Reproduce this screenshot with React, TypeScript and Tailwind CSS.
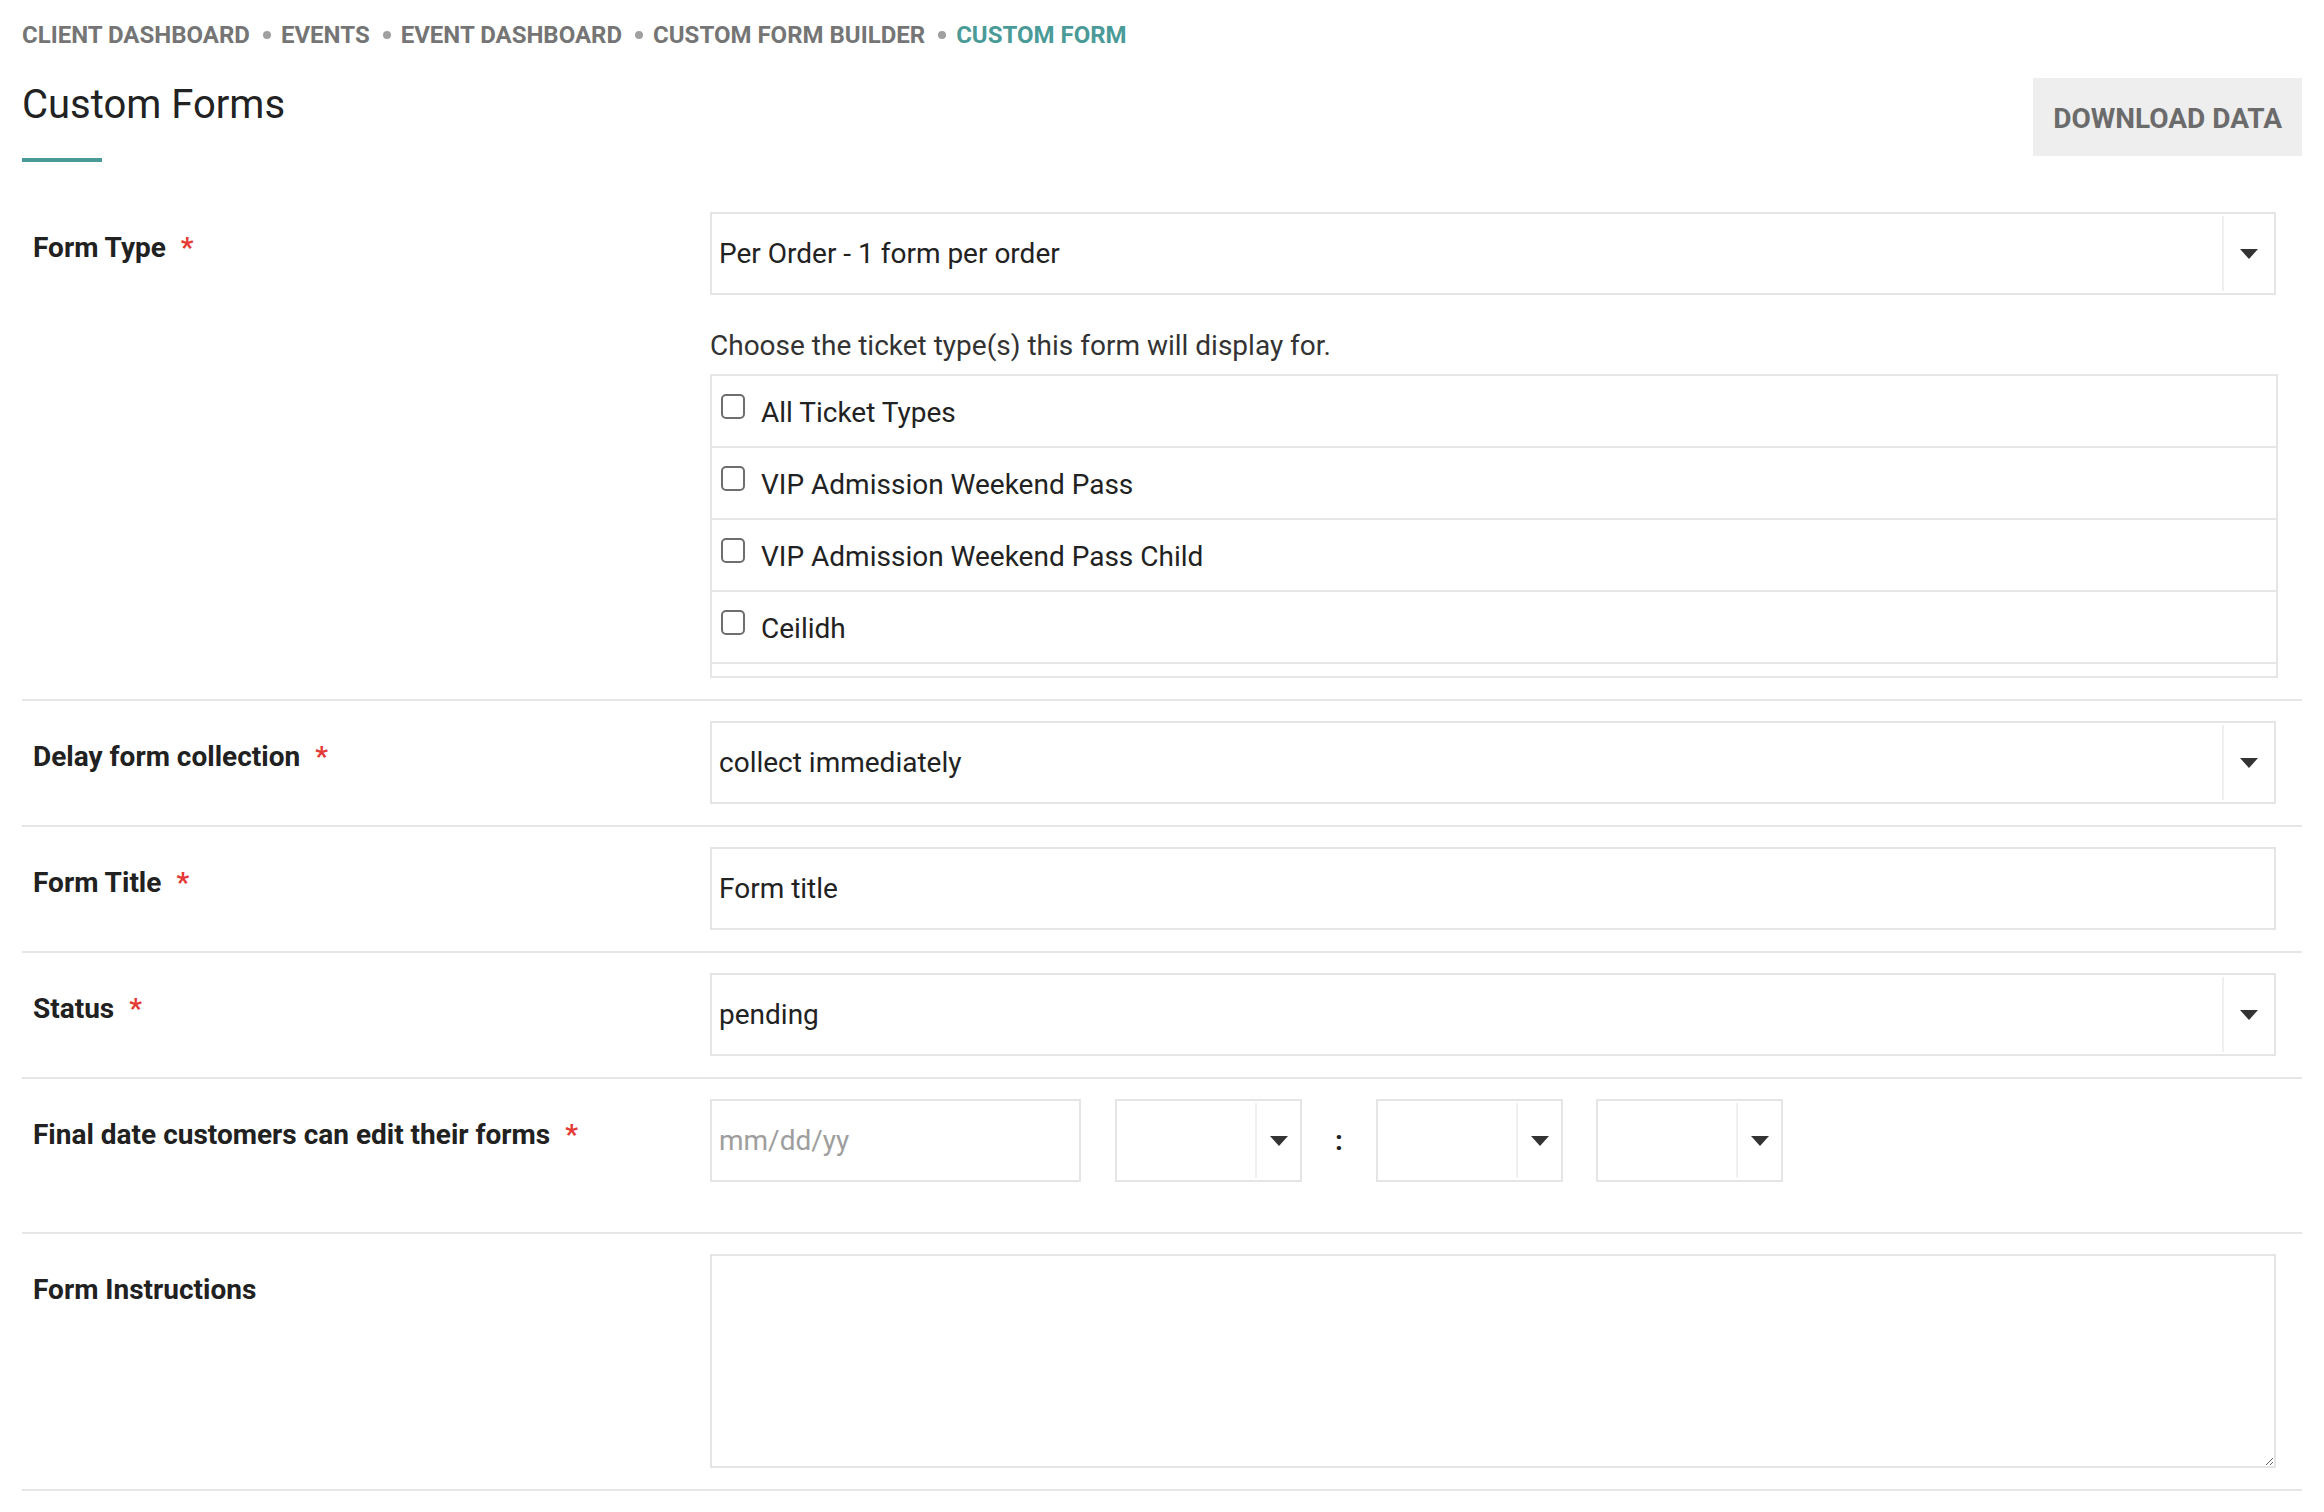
import React from 'react'

const crumbs = ['CLIENT DASHBOARD', 'EVENTS', 'EVENT DASHBOARD', 'CUSTOM FORM BUILDER']
const ticketTypes = ['All Ticket Types', 'VIP Admission Weekend Pass', 'VIP Admission Weekend Pass Child', 'Ceilidh']

function Caret() {
  return (
    <svg width="18" height="10" viewBox="0 0 18 10">
      <path d="M0 0h18L9 10z" fill="#333" />
    </svg>
  )
}

function SelectBox({ value, small }: { value?: string; small?: boolean }) {
  return (
    <div className={`h-[83px] border-2 border-[#e5e5e5] bg-white flex items-stretch ${small ? 'w-[187px]' : 'w-full'}`}>
      <div className="flex-1 flex items-center pl-[7px] text-[28px] text-[#222]">{value}</div>
      <div className="w-[2px] bg-[#f0f0f0] my-[2px]" />
      <div className={`flex items-center justify-center ${small ? 'w-[43px]' : 'w-[50px]'}`}>
        <Caret />
      </div>
    </div>
  )
}

function Label({ text, required = true }: { text: string; required?: boolean }) {
  return (
    <div className="pl-[11px] pt-[16px] text-[28px] leading-[40px] font-bold text-[#212121]">
      {text}
      {required && <span className="ml-[15px] text-[#e53935]">*</span>}
    </div>
  )
}

function Row({ children, label, extraBottom }: { children: React.ReactNode; label: React.ReactNode; extraBottom?: boolean }) {
  return (
    <div className={`grid grid-cols-[688px_1fr] pt-[20px] border-b-2 border-[#e6e6e6] ${extraBottom ? 'pb-[50px]' : 'pb-[21px]'}`}>
      {label}
      <div className="pr-[26px]">{children}</div>
    </div>
  )
}

export default function App() {
  return (
    <div className="min-h-screen bg-white px-[22px] font-['Roboto',_sans-serif]">
      {/* Breadcrumb */}
      <div className="pt-[22px] flex items-center text-[24px] leading-[26px] font-bold text-[#757575]">
        {crumbs.map((c) => (
          <React.Fragment key={c}>
            <span>{c}</span>
            <span className="ml-[13px] mr-[10px] w-[8px] h-[8px] rounded-full bg-[#a0a0a0]" />
          </React.Fragment>
        ))}
        <span className="text-[#4a9b98]">CUSTOM FORM</span>
      </div>

      {/* Header */}
      <div className="mt-[30px] flex items-start justify-between">
        <div>
          <h1 className="mt-[3px] text-[40px] leading-[48px] font-normal text-[#222]">Custom Forms</h1>
          <div className="mt-[29px] w-[80px] h-[4px] bg-[#4a9b98]" />
        </div>
        <button className="h-[78px] px-[20px] pt-[3px] bg-[#eeeeee] text-[28px] font-bold text-[#6b6b6b]">
          DOWNLOAD DATA
        </button>
      </div>

      {/* Form */}
      <div className="mt-[30px]">
        <Row label={<Label text="Form Type" />}>
          <SelectBox value="Per Order - 1 form per order" />
          <p className="mt-[31px] text-[28px] leading-[40px] text-[#333]">Choose the ticket type(s) this form will display for.</p>
          <div className="mt-[8px] mr-[-2px] border-2 border-[#e6e6e6] pb-[12px]">
            {ticketTypes.map((t) => (
              <label key={t} className="h-[72px] border-b-2 border-[#e6e6e6] flex items-center px-[9px] pt-[3px] gap-[16px] text-[28px] text-[#222]">
                <input type="checkbox" className="appearance-none w-[24px] h-[25px] mb-[12px] border-2 border-[#6e6e6e] rounded-[5px] bg-white shrink-0" />
                <span>{t}</span>
              </label>
            ))}
          </div>
        </Row>

        <Row label={<Label text="Delay form collection" />}>
          <SelectBox value="collect immediately" />
        </Row>

        <Row label={<Label text="Form Title" />}>
          <div className="h-[83px] border-2 border-[#e5e5e5] flex items-center pl-[7px] text-[28px] text-[#222]">Form title</div>
        </Row>

        <Row label={<Label text="Status" />}>
          <SelectBox value="pending" />
        </Row>

        <Row label={<Label text="Final date customers can edit their forms" />} extraBottom>
          <div className="flex items-center">
            <div className="w-[371px] h-[83px] border-2 border-[#e5e5e5] flex items-center pl-[7px] text-[28px] text-[#9e9e9e]">mm/dd/yy</div>
            <div className="ml-[34px]">
              <SelectBox small />
            </div>
            <div className="w-[74px] text-center text-[28px] font-bold text-[#222]">:</div>
            <SelectBox small />
            <div className="ml-[33px]">
              <SelectBox small />
            </div>
          </div>
        </Row>

        <Row label={<Label text="Form Instructions" required={false} />}>
          <textarea className="block w-full h-[214px] border-2 border-[#e5e5e5] outline-none resize-y" />
        </Row>
      </div>
    </div>
  )
}
